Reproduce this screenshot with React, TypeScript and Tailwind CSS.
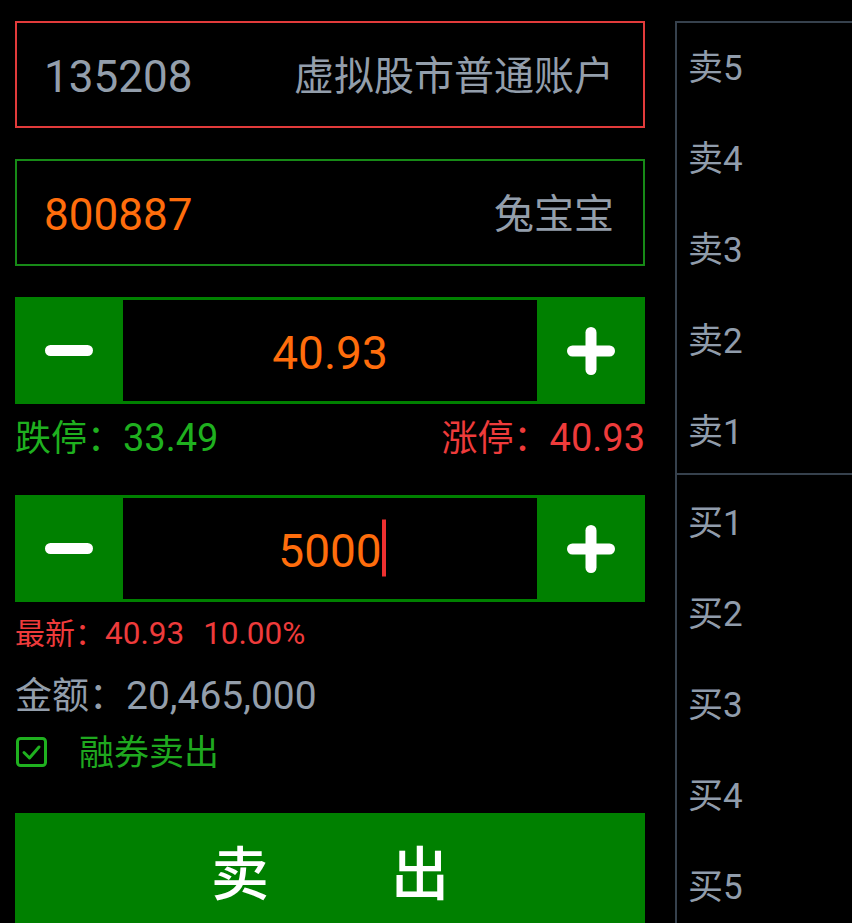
import React from "react";

const FONT = { fontFamily: "Roboto, 'Noto Sans CJK SC', sans-serif" };

function Minus() {
  return (
    <svg width="48" height="11" viewBox="0 0 48 11">
      <rect x="0" y="0" width="48" height="11" rx="5.5" fill="#fff" />
    </svg>
  );
}

function Plus() {
  return (
    <svg width="48" height="48" viewBox="0 0 48 48">
      <rect x="0" y="18.5" width="48" height="11" rx="5.5" fill="#fff" />
      <rect x="18.5" y="0" width="11" height="48" rx="5.5" fill="#fff" />
    </svg>
  );
}

function Stepper({ value, cursor }: { value: string; cursor?: boolean }) {
  return (
    <div className="h-[107px] bg-[#008000] flex py-[3px]">
      <div className="w-[108px] flex items-center justify-center">
        <Minus />
      </div>
      <div className="flex-1 bg-black flex items-center justify-center pt-[4px]">
        <span className="relative text-[46px] leading-none text-[#ff6d0c]">
          {value}
          {cursor && (
            <span className="absolute left-full top-1/2 -translate-y-1/2 mt-[-3px] w-[4px] h-[57px] bg-[#ee3030]" />
          )}
        </span>
      </div>
      <div className="w-[108px] flex items-center justify-center">
        <Plus />
      </div>
    </div>
  );
}

export default function App() {
  const sells = ["卖5", "卖4", "卖3", "卖2", "卖1"];
  const buys = ["买1", "买2", "买3", "买4", "买5"];
  return (
    <div className="w-[852px] h-[923px] bg-black overflow-hidden flex items-start" style={FONT}>
      <div className="w-[630px] ml-[15px] pt-[21px] shrink-0">
        <div className="h-[107px] border-2 border-[#e23b3b] flex items-center justify-between pl-[27px] pr-[29px] pt-[5px]">
          <span className="text-[44px] text-[#939eab] leading-none">135208</span>
          <span className="text-[40px] text-[#939eab] leading-none">虚拟股市普通账户</span>
        </div>
        <div className="mt-[31px] h-[107px] border-2 border-[#178a17] flex items-center justify-between pl-[27px] pr-[29px] pt-[5px]">
          <span className="text-[44px] text-[#ff6d0c] leading-none">800887</span>
          <span className="text-[40px] text-[#939eab] leading-none">兔宝宝</span>
        </div>
        <div className="mt-[31px]">
          <Stepper value="40.93" />
        </div>
        <div className="h-[66px] flex items-center justify-between text-[36px] leading-none pt-[2px]">
          <span className="text-[#1fb01f]">
            跌停：<span className="text-[38px]">33.49</span>
          </span>
          <span className="text-[#ee3b3b]">
            涨停：<span className="text-[38px]">40.93</span>
          </span>
        </div>
        <div className="mt-[25px]">
          <Stepper value="5000" cursor />
        </div>
        <div className="h-[64px] flex items-center text-[30px] leading-none text-[#ee3b3b]">
          <span>
            最新：<span className="text-[31.5px]">40.93</span>
          </span>
          <span className="ml-[19px] text-[31.5px]">10.00%</span>
        </div>
        <div className="h-[60px] flex items-center text-[37px] leading-none text-[#939eab]">
          <span>
            金额：<span className="text-[39px]">20,465,000</span>
          </span>
        </div>
        <div className="h-[54px] flex items-center">
          <svg width="31" height="31" viewBox="0 0 31 31" className="ml-[1px] mt-[-2px]">
            <rect x="1.5" y="1.5" width="28" height="27" rx="3" fill="none" stroke="#1fb01f" strokeWidth="3" />
            <path d="M8 15.5 L13.5 21 L23 10" fill="none" stroke="#1fb01f" strokeWidth="3" strokeLinecap="round" strokeLinejoin="round" />
          </svg>
          <span className="ml-[32px] text-[35px] leading-none text-[#1fa81f]">融券卖出</span>
        </div>
        <div className="mt-[33px] h-[124px] bg-[#008000] flex items-center justify-center gap-[122px] text-[58px] leading-none text-white font-medium">
          <span>卖</span>
          <span>出</span>
        </div>
      </div>
      <div className="ml-[30px] mt-[21px] h-[902px] flex-1 border-l-2 border-t-2 border-[#36414d]">
        <div className="h-[452px] border-b-2 border-[#36414d] overflow-hidden">
          {sells.map((s) => (
            <div key={s} className="h-[91px] flex items-center pl-[11px] text-[35px] leading-none text-[#909cab]">
              {s}
            </div>
          ))}
        </div>
        <div className="pt-[3px]">
          {buys.map((s) => (
            <div key={s} className="h-[91px] flex items-center pl-[11px] text-[35px] leading-none text-[#909cab]">
              {s}
            </div>
          ))}
        </div>
      </div>
    </div>
  );
}
